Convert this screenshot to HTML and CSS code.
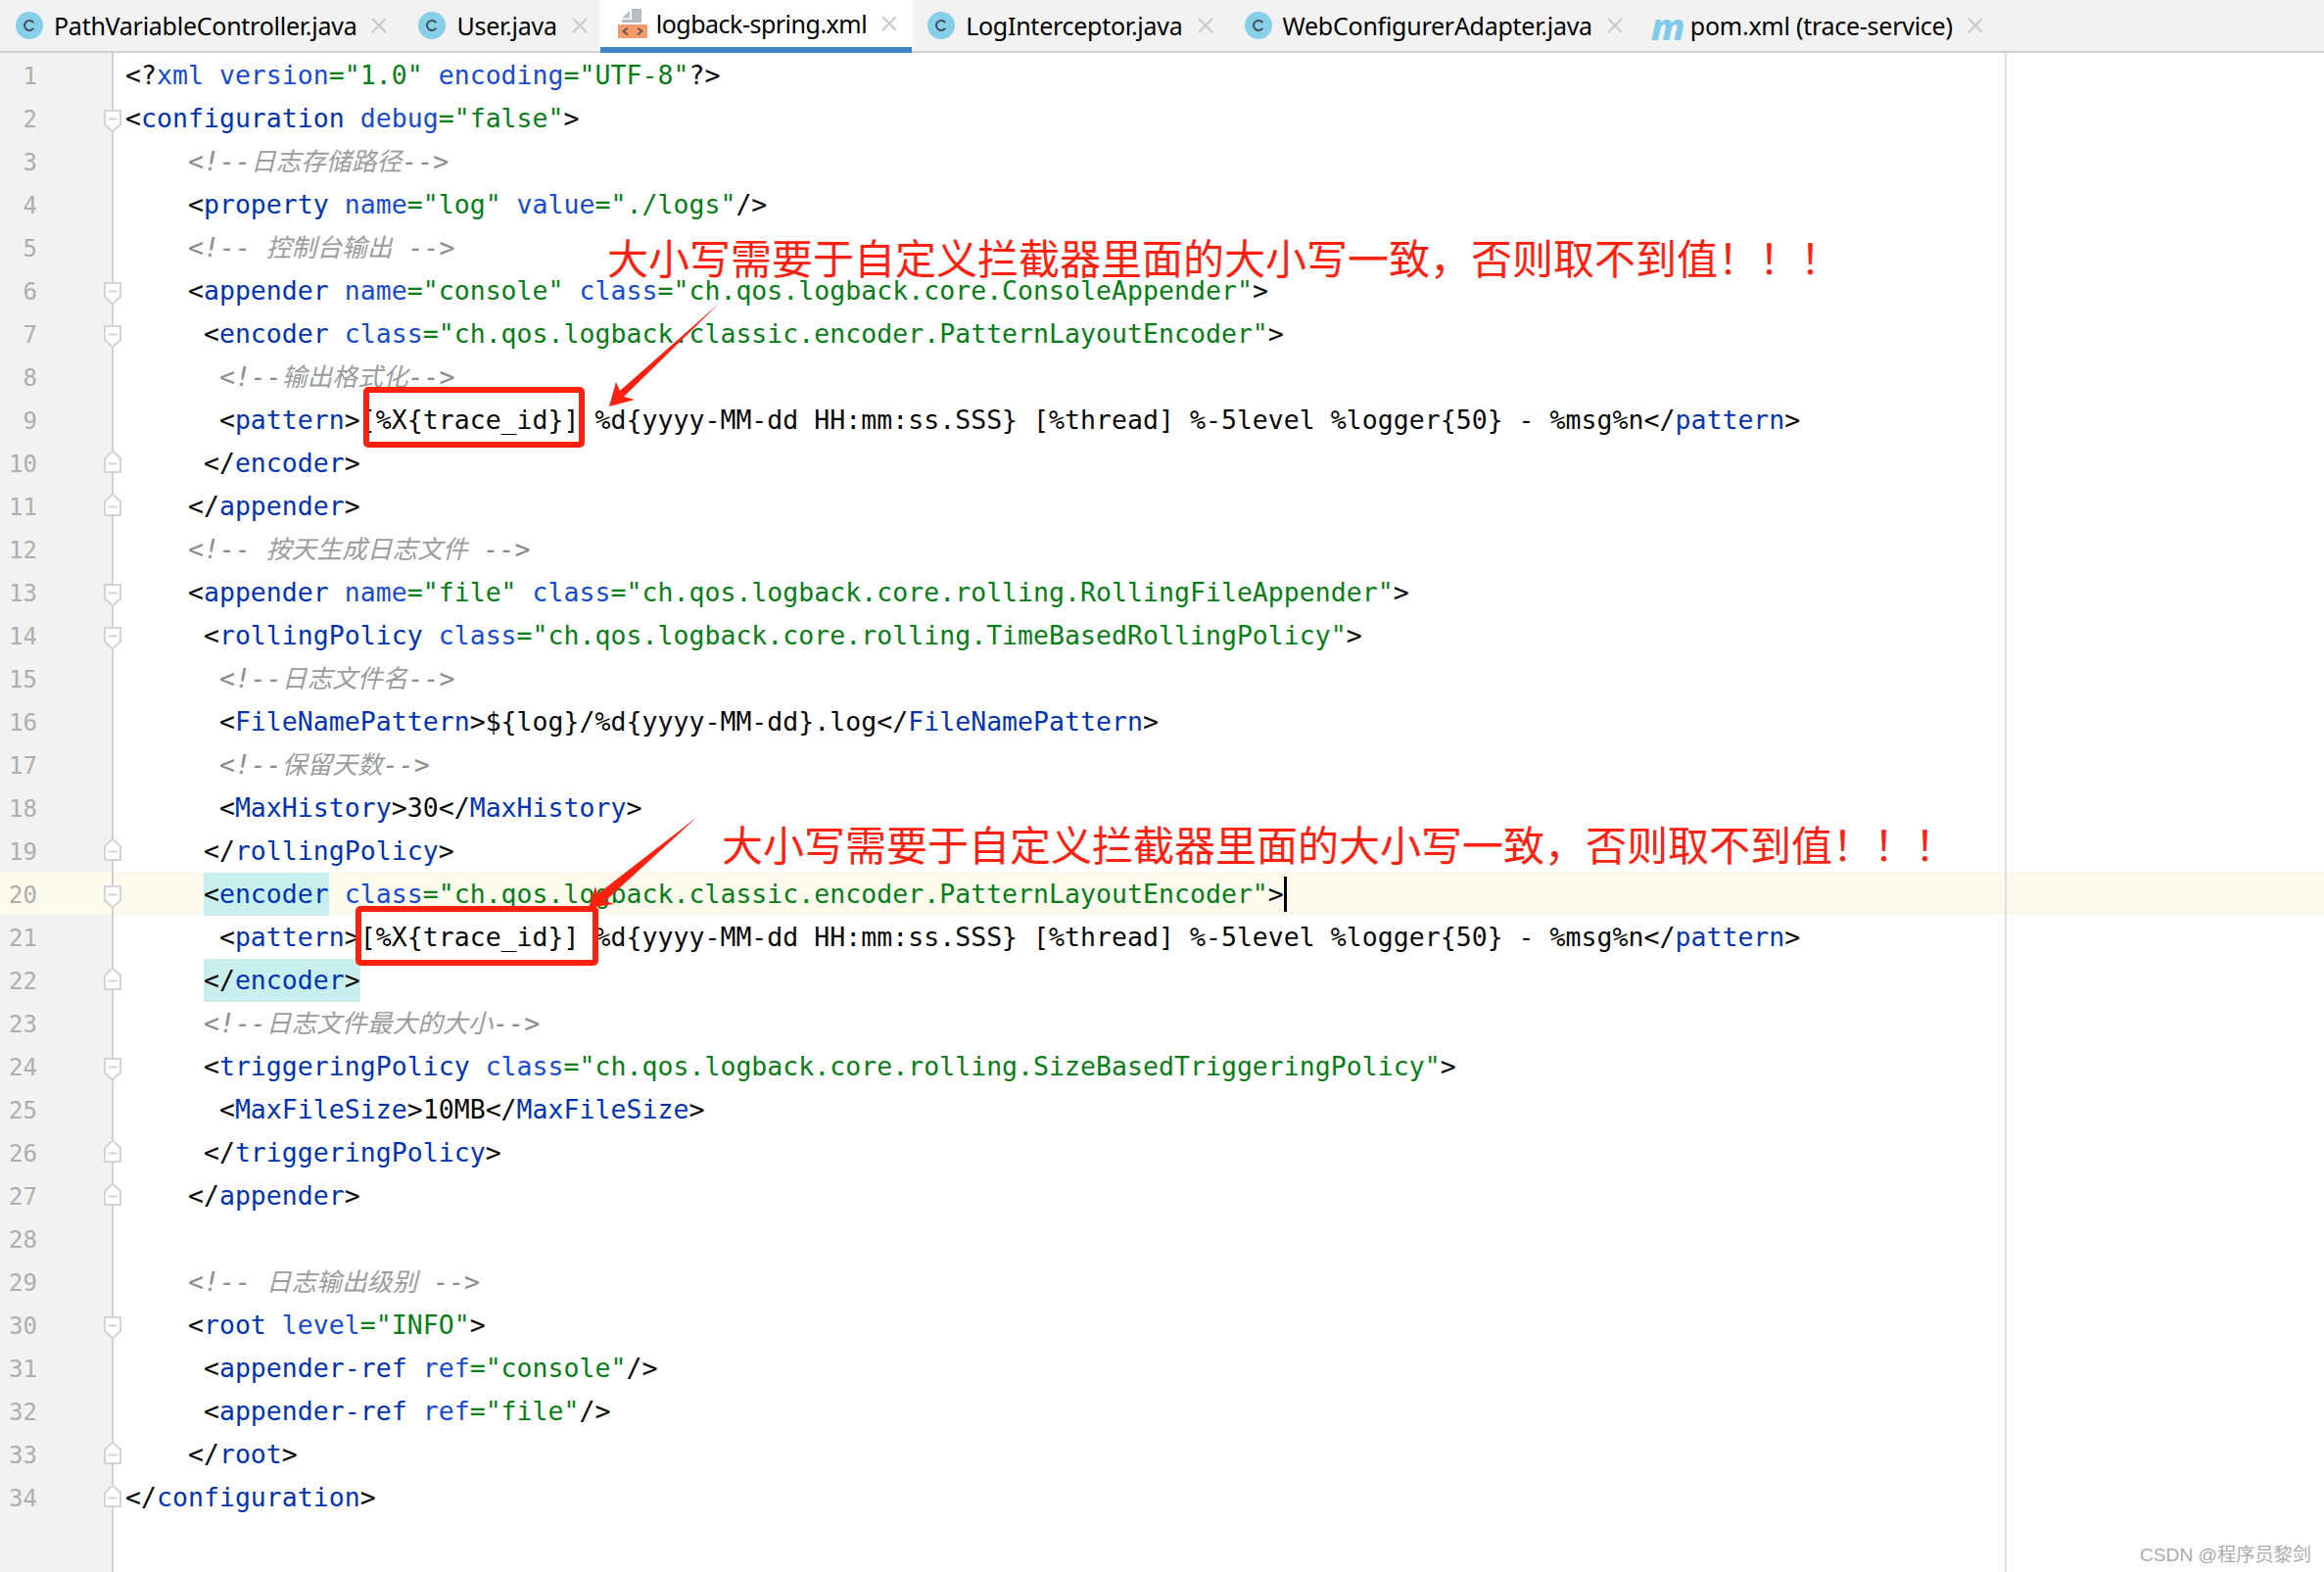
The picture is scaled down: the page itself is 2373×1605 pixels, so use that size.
FILE: index.html
```html
<!DOCTYPE html>
<html lang="zh-CN">
<head>
<meta charset="utf-8">
<title>logback-spring.xml</title>
<link rel="stylesheet" href="styles.css">
</head>
<body>
<svg class="defs" width="0" height="0" aria-hidden="true">
  <symbol id="cls" viewBox="0 0 28 28"><circle cx="14" cy="14" r="14" fill="#87cfe9"/><path d="M18.2 11.2a5 5 0 1 0 0 5.6" fill="none" stroke="#3e4d59" stroke-width="2"/></symbol>
  <symbol id="close" viewBox="0 0 16 16"><path d="M1 1l14 14M15 1L1 15" fill="none" stroke="#c9c9c9" stroke-width="2"/></symbol>
  <symbol id="fold-open" viewBox="0 0 18 24"><path d="M1 1H17V15L9 22.5L1 15Z" fill="#fff" stroke="#d3d3d3" stroke-width="2"/><path d="M4.5 9.5H13.5" stroke="#d3d3d3" stroke-width="2"/></symbol>
  <symbol id="fold-close" viewBox="0 0 18 24"><path d="M1 23H17V9L9 1.5L1 9Z" fill="#fff" stroke="#d3d3d3" stroke-width="2"/><path d="M4.5 14.5H13.5" stroke="#d3d3d3" stroke-width="2"/></symbol>
</svg>
<div class="page">
  <nav class="tabs">
    <div class="tab"><svg class="ico"><use href="#cls"/></svg><span class="name">PathVariableController.java</span><svg class="x"><use href="#close"/></svg></div>
    <div class="tab user"><svg class="ico"><use href="#cls"/></svg><span class="name">User.java</span><svg class="x"><use href="#close"/></svg></div>
    <div class="tab active"><svg class="ico xml" viewBox="0 0 30 30"><path d="M14 0H24V14H4V11H14Z" fill="#b5bcc2"/><path d="M4 9.5L12 2V9.5Z" fill="#b5bcc2"/><rect y="16" width="30" height="14" fill="#f99a6b"/><path d="M10 19.5L5.5 23L10 26.5M20 19.5L24.5 23L20 26.5" fill="none" stroke="#6f5a4f" stroke-width="2"/></svg><span class="name">logback-spring.xml</span><svg class="x"><use href="#close"/></svg></div>
    <div class="tab"><svg class="ico"><use href="#cls"/></svg><span class="name">LogInterceptor.java</span><svg class="x"><use href="#close"/></svg></div>
    <div class="tab"><svg class="ico"><use href="#cls"/></svg><span class="name">WebConfigurerAdapter.java</span><svg class="x"><use href="#close"/></svg></div>
    <div class="tab pom"><span class="ico mvn">m</span><span class="name">pom.xml (trace-service)</span><svg class="x"><use href="#close"/></svg></div>
  </nav>
  <main class="editor">
    <div class="row"><div class="gutter"><span class="num">1</span></div><div class="code">&lt;?<span class="a">xml</span> <span class="a">version</span><span class="s">="1.0"</span> <span class="a">encoding</span><span class="s">="UTF-8"</span>?&gt;</div></div>
    <div class="row"><div class="gutter"><span class="num">2</span><svg class="fold open"><use href="#fold-open"/></svg></div><div class="code">&lt;<span class="t">configuration</span> <span class="a">debug</span><span class="s">="false"</span>&gt;</div></div>
    <div class="row"><div class="gutter"><span class="num">3</span></div><div class="code">    <span class="c">&lt;!--<span class="z">日志存储路径</span>--&gt;</span></div></div>
    <div class="row"><div class="gutter"><span class="num">4</span></div><div class="code">    &lt;<span class="t">property</span> <span class="a">name</span><span class="s">="log"</span> <span class="a">value</span><span class="s">="./logs"</span>/&gt;</div></div>
    <div class="row"><div class="gutter"><span class="num">5</span></div><div class="code">    <span class="c">&lt;!-- <span class="z">控制台输出</span> --&gt;</span></div></div>
    <div class="row"><div class="gutter"><span class="num">6</span><svg class="fold open"><use href="#fold-open"/></svg></div><div class="code">    &lt;<span class="t">appender</span> <span class="a">name</span><span class="s">="console"</span> <span class="a">class</span><span class="s">="ch.qos.logback.core.ConsoleAppender"</span>&gt;</div></div>
    <div class="row"><div class="gutter"><span class="num">7</span><svg class="fold open"><use href="#fold-open"/></svg></div><div class="code">     &lt;<span class="t">encoder</span> <span class="a">class</span><span class="s">="ch.qos.logback.classic.encoder.PatternLayoutEncoder"</span>&gt;</div></div>
    <div class="row"><div class="gutter"><span class="num">8</span></div><div class="code">      <span class="c">&lt;!--<span class="z">输出格式化</span>--&gt;</span></div></div>
    <div class="row"><div class="gutter"><span class="num">9</span></div><div class="code">      &lt;<span class="t">pattern</span>&gt;[%X{trace_id}] %d{yyyy-MM-dd HH:mm:ss.SSS} [%thread] %-5level %logger{50} - %msg%n&lt;/<span class="t">pattern</span>&gt;</div></div>
    <div class="row"><div class="gutter"><span class="num">10</span><svg class="fold shut"><use href="#fold-close"/></svg></div><div class="code">     &lt;/<span class="t">encoder</span>&gt;</div></div>
    <div class="row"><div class="gutter"><span class="num">11</span><svg class="fold shut"><use href="#fold-close"/></svg></div><div class="code">    &lt;/<span class="t">appender</span>&gt;</div></div>
    <div class="row"><div class="gutter"><span class="num">12</span></div><div class="code">    <span class="c">&lt;!-- <span class="z">按天生成日志文件</span> --&gt;</span></div></div>
    <div class="row"><div class="gutter"><span class="num">13</span><svg class="fold open"><use href="#fold-open"/></svg></div><div class="code">    &lt;<span class="t">appender</span> <span class="a">name</span><span class="s">="file"</span> <span class="a">class</span><span class="s">="ch.qos.logback.core.rolling.RollingFileAppender"</span>&gt;</div></div>
    <div class="row"><div class="gutter"><span class="num">14</span><svg class="fold open"><use href="#fold-open"/></svg></div><div class="code">     &lt;<span class="t">rollingPolicy</span> <span class="a">class</span><span class="s">="ch.qos.logback.core.rolling.TimeBasedRollingPolicy"</span>&gt;</div></div>
    <div class="row"><div class="gutter"><span class="num">15</span></div><div class="code">      <span class="c">&lt;!--<span class="z">日志文件名</span>--&gt;</span></div></div>
    <div class="row"><div class="gutter"><span class="num">16</span></div><div class="code">      &lt;<span class="t">FileNamePattern</span>&gt;${log}/%d{yyyy-MM-dd}.log&lt;/<span class="t">FileNamePattern</span>&gt;</div></div>
    <div class="row"><div class="gutter"><span class="num">17</span></div><div class="code">      <span class="c">&lt;!--<span class="z">保留天数</span>--&gt;</span></div></div>
    <div class="row"><div class="gutter"><span class="num">18</span></div><div class="code">      &lt;<span class="t">MaxHistory</span>&gt;30&lt;/<span class="t">MaxHistory</span>&gt;</div></div>
    <div class="row"><div class="gutter"><span class="num">19</span><svg class="fold shut"><use href="#fold-close"/></svg></div><div class="code">     &lt;/<span class="t">rollingPolicy</span>&gt;</div></div>
    <div class="row current"><div class="gutter"><span class="num">20</span><svg class="fold open"><use href="#fold-open"/></svg></div><div class="code">     <span class="match">&lt;<span class="t">encoder</span></span> <span class="a">class</span><span class="s">="ch.qos.logback.classic.encoder.PatternLayoutEncoder"</span>&gt;<span class="caret"></span></div></div>
    <div class="row"><div class="gutter"><span class="num">21</span></div><div class="code">      &lt;<span class="t">pattern</span>&gt;[%X{trace_id}] %d{yyyy-MM-dd HH:mm:ss.SSS} [%thread] %-5level %logger{50} - %msg%n&lt;/<span class="t">pattern</span>&gt;</div></div>
    <div class="row"><div class="gutter"><span class="num">22</span><svg class="fold shut"><use href="#fold-close"/></svg></div><div class="code">     <span class="match">&lt;/<span class="t">encoder</span>&gt;</span></div></div>
    <div class="row"><div class="gutter"><span class="num">23</span></div><div class="code">     <span class="c">&lt;!--<span class="z">日志文件最大的大小</span>--&gt;</span></div></div>
    <div class="row"><div class="gutter"><span class="num">24</span><svg class="fold open"><use href="#fold-open"/></svg></div><div class="code">     &lt;<span class="t">triggeringPolicy</span> <span class="a">class</span><span class="s">="ch.qos.logback.core.rolling.SizeBasedTriggeringPolicy"</span>&gt;</div></div>
    <div class="row"><div class="gutter"><span class="num">25</span></div><div class="code">      &lt;<span class="t">MaxFileSize</span>&gt;10MB&lt;/<span class="t">MaxFileSize</span>&gt;</div></div>
    <div class="row"><div class="gutter"><span class="num">26</span><svg class="fold shut"><use href="#fold-close"/></svg></div><div class="code">     &lt;/<span class="t">triggeringPolicy</span>&gt;</div></div>
    <div class="row"><div class="gutter"><span class="num">27</span><svg class="fold shut"><use href="#fold-close"/></svg></div><div class="code">    &lt;/<span class="t">appender</span>&gt;</div></div>
    <div class="row"><div class="gutter"><span class="num">28</span></div><div class="code"></div></div>
    <div class="row"><div class="gutter"><span class="num">29</span></div><div class="code">    <span class="c">&lt;!-- <span class="z">日志输出级别</span> --&gt;</span></div></div>
    <div class="row"><div class="gutter"><span class="num">30</span><svg class="fold open"><use href="#fold-open"/></svg></div><div class="code">    &lt;<span class="t">root</span> <span class="a">level</span><span class="s">="INFO"</span>&gt;</div></div>
    <div class="row"><div class="gutter"><span class="num">31</span></div><div class="code">     &lt;<span class="t">appender-ref</span> <span class="a">ref</span><span class="s">="console"</span>/&gt;</div></div>
    <div class="row"><div class="gutter"><span class="num">32</span></div><div class="code">     &lt;<span class="t">appender-ref</span> <span class="a">ref</span><span class="s">="file"</span>/&gt;</div></div>
    <div class="row"><div class="gutter"><span class="num">33</span><svg class="fold shut"><use href="#fold-close"/></svg></div><div class="code">    &lt;/<span class="t">root</span>&gt;</div></div>
    <div class="row"><div class="gutter"><span class="num">34</span><svg class="fold shut"><use href="#fold-close"/></svg></div><div class="code">&lt;/<span class="t">configuration</span>&gt;</div></div>
    <div class="row filler"><div class="gutter"></div><div class="code"></div></div>
  </main>
  <div class="margin-line"></div>
  <div class="box box-a"></div>
  <div class="box box-b"></div>
  <svg class="arrows" viewBox="0 0 2373 1605" aria-hidden="true">
    <path d="M735 309L637 405L648 408L622 415L629 390L633 399Z" fill="#ff2010"/>
    <path d="M712 834L618 920L627 923L601 927L608 905L610 913Z" fill="#ff2010"/>
  </svg>
  <div class="note note-a">大小写需要于自定义拦截器里面的大小写一致，否则取不到值！！！</div>
  <div class="note note-b">大小写需要于自定义拦截器里面的大小写一致，否则取不到值！！！</div>
  <div class="mark">CSDN @程序员黎剑</div>
</div>
</body>
</html>
```
FILE: styles.css
```css
* { box-sizing: border-box; }
html, body { margin: 0; padding: 0; background: #fff; }
.defs { position: absolute; }
.page {
  position: relative;
  width: 2373px;
  height: 1605px;
  overflow: hidden;
  display: flex;
  flex-direction: column;
  background: #fff;
}
.tabs {
  display: flex;
  height: 54px;
  flex: none;
  background: #f2f2f2;
  border-bottom: 2px solid #d1d1d1;
  font: 25px "Noto Sans", sans-serif;
  letter-spacing: -0.26px;
  color: #000;
}
.tab {
  display: flex;
  align-items: center;
  height: 52px;
  padding: 0 16px;
}
.tab.user { padding-right: 13px; }
.tab.active {
  height: 54px;
  padding: 0 15px 0 18px;
  background: #fff;
  border-bottom: 6px solid #4083c9;
  letter-spacing: -0.5px;
}
.tab.active .name { margin-left: 9px; }
.tab.pom { padding-left: 13px; }
.tab.pom .name { margin-left: 10px; }
.ico { width: 28px; height: 28px; flex: none; }
.name { margin-left: 11px; white-space: pre; }
.x { width: 16px; height: 16px; margin-left: 15px; flex: none; }
.xml { width: 30px; height: 30px; }
.mvn {
  width: 30px;
  font: italic 800 38px/28px "Noto Sans", sans-serif;
  letter-spacing: 0;
  color: #7fcbea;
}
.editor {
  flex: 1;
  display: flex;
  flex-direction: column;
  min-height: 0;
  font: 26.5px/44px "DejaVu Sans Mono", "Noto Sans CJK SC", monospace;
  letter-spacing: 0.03px;
  color: #080808;
}
.row { display: flex; height: 44px; flex: none; }
.row.filler { flex: 1; }
.gutter {
  position: relative;
  width: 116px;
  flex: none;
  background: #f2f2f2;
  border-right: 2px solid #d1d1d1;
}
.num {
  display: block;
  width: 38px;
  padding-top: 1.5px;
  text-align: right;
  font-size: 24px;
  color: #aeaeae;
}
.fold {
  position: absolute;
  left: 106px;
  width: 18px;
  height: 24px;
  z-index: 1;
}
.fold.open { top: 14px; }
.fold.shut { top: 9px; }
.code {
  flex: 1;
  padding: 1px 0 0 12px;
  white-space: pre;
}
.t { color: #0033b3; }
.a { color: #174ad4; }
.s { color: #067d17; }
.c { color: #8c8c8c; font-style: italic; }
.z {
  font-family: "Noto Sans CJK SC", sans-serif;
  font-size: 25.7px;
  line-height: 26px;
  color: #9c9c9c;
}
.row.current, .row.current .gutter { background: #fcfaed; }
.match {
  display: inline-block;
  height: 44px;
  margin: -1px 0 1px;
  background: #c8eeee;
}
.caret {
  display: inline-block;
  width: 3px;
  height: 36px;
  vertical-align: -9px;
  background: #000;
}
.margin-line {
  position: absolute;
  left: 2047px;
  top: 54px;
  bottom: 0;
  width: 2px;
  background: #e0e0e0;
}
.box {
  position: absolute;
  border: 6px solid #ff2010;
  border-radius: 5px;
}
.box-a { left: 371px; top: 395px; width: 226px; height: 62px; }
.box-b { left: 363px; top: 925px; width: 248px; height: 61px; }
.arrows { position: absolute; inset: 0; width: 2373px; height: 1605px; }
.note {
  position: absolute;
  font: 42px/60px "Noto Sans CJK SC", sans-serif;
  color: #ff2010;
  white-space: nowrap;
}
.note-a { left: 620px; top: 231.5px; }
.note-b { left: 737px; top: 830.5px; }
.mark {
  position: absolute;
  right: 13px;
  top: 1576px;
  font: 19.2px/24px "Liberation Sans", "Noto Sans CJK SC", sans-serif;
  color: #ababab;
}
```
